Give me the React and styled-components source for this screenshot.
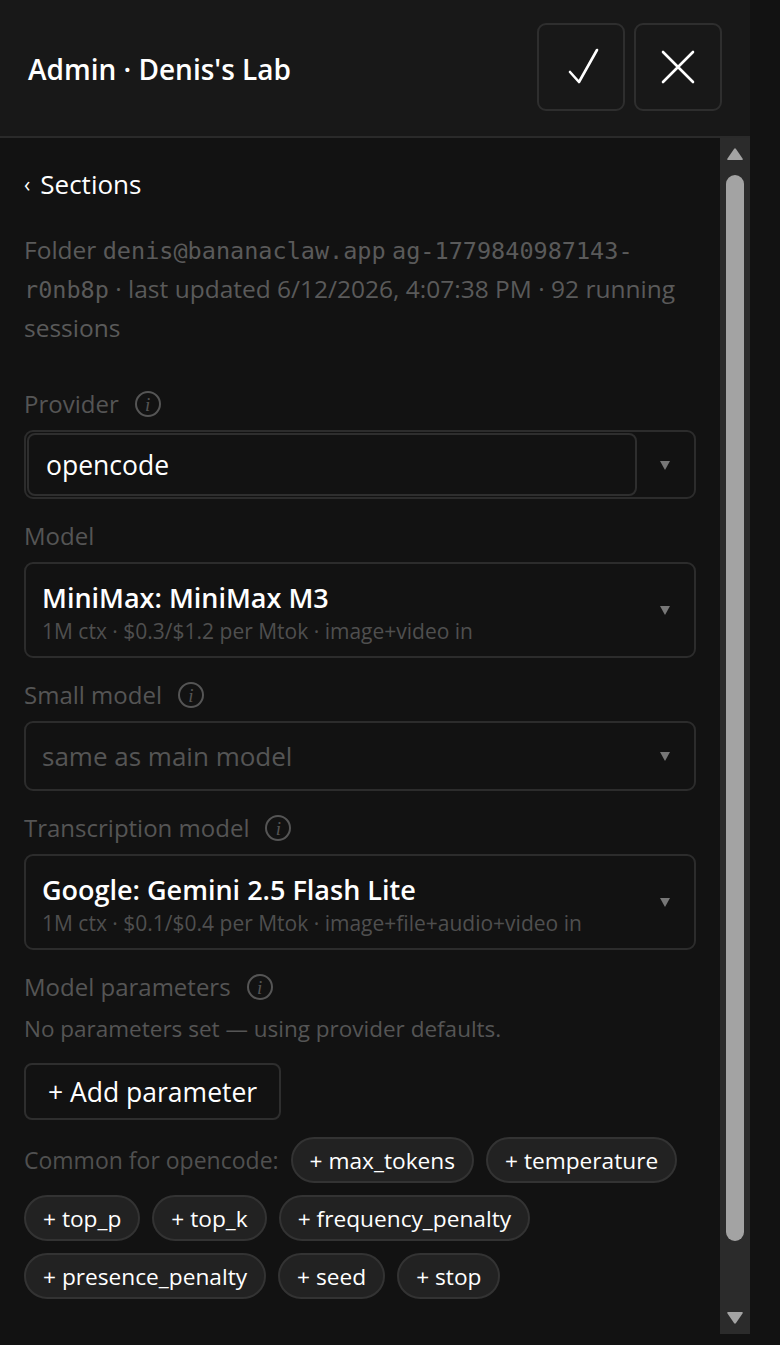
import React from 'react';
import styled, { createGlobalStyle } from 'styled-components';

const GlobalStyle = createGlobalStyle`
    *, *::before, *::after {
        box-sizing: border-box;
    }
    html, body {
        margin: 0;
        padding: 0;
        background: #121212;
    }
    body {
        font-family: 'Open Sans', 'Noto Sans', sans-serif;
        color: #fff;
    }
`;

const Page = styled.div`
    display: flex;
    width: 780px;
    height: 1345px;
    background: #121212;
    overflow: hidden;
`;

const Panel = styled.div`
    width: 750px;
    height: 1334px;
    display: flex;
    flex-direction: column;
`;

const Header = styled.header`
    height: 138px;
    flex-shrink: 0;
    display: flex;
    align-items: center;
    justify-content: space-between;
    padding: 0 28px 2px;
    background: #181818;
    border-bottom: 2px solid #2a2a2a;

    h1 {
        margin: 0;
        font-size: 28px;
        font-weight: 600;
        padding-top: 3px;
    }
`;

const HeaderActions = styled.div`
    display: flex;
    gap: 9px;
`;

const IconButton = styled.button`
    width: 88px;
    height: 88px;
    display: flex;
    align-items: center;
    justify-content: center;
    background: #181818;
    border: 2px solid #2e2e2e;
    border-radius: 9px;
    color: #fff;
    padding: 0;
`;

const Body = styled.div`
    flex: 1;
    display: flex;
    min-height: 0;
`;

const Content = styled.div`
    flex: 1;
    padding: 28px 24px 0 24px;
    overflow: hidden;
`;

const BackLink = styled.div`
    font-size: 26px;
    line-height: 36px;
    color: #fff;

    span {
        font-size: 21px;
        margin-right: 10px;
        position: relative;
        top: -2px;
    }
`;

const Meta = styled.p`
    margin: 27px 0 40px;
    font-size: 24.5px;
    line-height: 38px;
    color: #5a5a5a;

    code {
        font-family: 'DejaVu Sans Mono', 'Liberation Mono', monospace;
        font-size: 23.5px;
        line-height: 38px;
    }
`;

const Fields = styled.div`
    display: flex;
    flex-direction: column;
    gap: 20px;
`;

const Field = styled.div`
    display: flex;
    flex-direction: column;
    gap: 9px;
`;

const Label = styled.div`
    display: flex;
    align-items: center;
    gap: 16px;
    font-size: 24px;
    line-height: 34px;
    color: #555;
`;

const Info = styled.span`
    width: 26px;
    height: 26px;
    border: 2px solid #555;
    border-radius: 50%;
    display: inline-flex;
    align-items: center;
    justify-content: center;
    font-family: 'Liberation Serif', serif;
    font-style: italic;
    font-size: 19px;
    line-height: 1;
`;

const SelectBox = styled.div`
    position: relative;
    display: flex;
    align-items: center;
    height: ${(p) => p.h}px;
    border: 2px solid #2c2c2c;
    border-radius: 9px;
    background: #121212;
    padding: 0 60px 0 16px;
`;

const Caret = styled.span`
    position: absolute;
    right: 24px;
    top: 50%;
    margin-top: -4px;
    width: 0;
    height: 0;
    border-left: 5px solid transparent;
    border-right: 5px solid transparent;
    border-top: 9px solid #777;
`;

const Combo = styled.div`
    display: flex;
    height: 69px;
    border: 2px solid #2c2c2c;
    border-radius: 9px;
    padding: 1px 0 1px 1px;
`;

const ComboInput = styled.div`
    flex: 1;
    display: flex;
    align-items: center;
    padding-left: 17px;
    border: 2px solid #2e2e2e;
    border-radius: 8px;
    font-size: 26.5px;
    color: #fff;
`;

const ComboToggle = styled.div`
    position: relative;
    width: 57px;
    flex-shrink: 0;
`;

const Option = styled.div`
    display: flex;
    flex-direction: column;
    padding-top: 8px;

    strong {
        font-size: 27px;
        font-weight: 600;
        line-height: 34px;
        color: #fff;
    }

    small {
        font-size: 21px;
        line-height: 33px;
        color: #4f4f4f;
    }
`;

const Placeholder = styled.span`
    font-size: 26px;
    color: #555;
`;

const Hint = styled.div`
    margin-top: -11px;
    font-size: 22.5px;
    line-height: 32px;
    color: #555;
`;

const AddButton = styled.button`
    align-self: flex-start;
    margin-top: -2px;
    height: 57px;
    padding: 0 22px;
    font-family: inherit;
    font-size: 26.5px;
    color: #fff;
    background: #121212;
    border: 2px solid #2e2e2e;
    border-radius: 8px;
`;

const Chips = styled.div`
    display: flex;
    flex-wrap: wrap;
    align-items: center;
    gap: 12px;
    margin-top: -3px;
`;

const ChipsLabel = styled.span`
    font-size: 23px;
    color: #505050;
`;

const Chip = styled.button`
    height: 46px;
    padding: 0 17px;
    font-family: inherit;
    font-size: 22.7px;
    color: #fff;
    background: #222;
    border: 2px solid #333;
    border-radius: 23px;
`;

const Scrollbar = styled.div`
    width: 30px;
    flex-shrink: 0;
    background: #2b2b2b;
    display: flex;
    flex-direction: column;
    align-items: center;
    padding: 9px 0;
    gap: 14px;
`;

const Thumb = styled.div`
    width: 18px;
    height: 1066px;
    border-radius: 9px;
    background: #a3a3a3;
`;

const Spacer = styled.div`
    flex: 1;
`;

const Arrow = ({ down }) => (
    <svg width="18" height="14" viewBox="0 0 18 14">
        <path
            d={down ? 'M2 1 H16 Q17.5 1 16.5 2.5 L10 12 Q9 13.3 8 12 L1.5 2.5 Q0.5 1 2 1 Z' : 'M2 13 H16 Q17.5 13 16.5 11.5 L10 2 Q9 0.7 8 2 L1.5 11.5 Q0.5 13 2 13 Z'}
            fill="#a3a3a3"
        />
    </svg>
);

const params = [
    'max_tokens',
    'temperature',
    'top_p',
    'top_k',
    'frequency_penalty',
    'presence_penalty',
    'seed',
    'stop',
];

const App = () => {
    return (
        <Page>
            <GlobalStyle />
            <Panel>
                <Header>
                    <h1>Admin · Denis's Lab</h1>
                    <HeaderActions>
                        <IconButton aria-label="Save">
                            <svg width="40" height="40" viewBox="0 0 40 40">
                                <path
                                    d="M9 25 L18 35 L36 3"
                                    fill="none"
                                    stroke="#fff"
                                    strokeWidth="2.6"
                                    strokeLinecap="round"
                                    strokeLinejoin="round"
                                />
                            </svg>
                        </IconButton>
                        <IconButton aria-label="Close">
                            <svg width="34" height="34" viewBox="0 0 34 34">
                                <path
                                    d="M2 2 L32 32 M32 2 L2 32"
                                    fill="none"
                                    stroke="#fff"
                                    strokeWidth="2.6"
                                    strokeLinecap="round"
                                />
                            </svg>
                        </IconButton>
                    </HeaderActions>
                </Header>
                <Body>
                    <Content>
                        <BackLink>
                            <span>‹</span>Sections
                        </BackLink>
                        <Meta>
                            Folder <code>denis@bananaclaw.app</code>{' '}
                            <code>ag-1779840987143-r0nb8p</code> · last updated
                            6/12/2026, 4:07:38 PM · 92 running sessions
                        </Meta>
                        <Fields>
                            <Field>
                                <Label>
                                    Provider <Info>i</Info>
                                </Label>
                                <Combo>
                                    <ComboInput>opencode</ComboInput>
                                    <ComboToggle>
                                        <Caret />
                                    </ComboToggle>
                                </Combo>
                            </Field>
                            <Field>
                                <Label>Model</Label>
                                <SelectBox h={96}>
                                    <Option>
                                        <strong>MiniMax: MiniMax M3</strong>
                                        <small>
                                            1M ctx · $0.3/$1.2 per Mtok ·
                                            image+video in
                                        </small>
                                    </Option>
                                    <Caret />
                                </SelectBox>
                            </Field>
                            <Field>
                                <Label>
                                    Small model <Info>i</Info>
                                </Label>
                                <SelectBox h={70}>
                                    <Placeholder>same as main model</Placeholder>
                                    <Caret />
                                </SelectBox>
                            </Field>
                            <Field>
                                <Label>
                                    Transcription model <Info>i</Info>
                                </Label>
                                <SelectBox h={96}>
                                    <Option>
                                        <strong>
                                            Google: Gemini 2.5 Flash Lite
                                        </strong>
                                        <small>
                                            1M ctx · $0.1/$0.4 per Mtok ·
                                            image+file+audio+video in
                                        </small>
                                    </Option>
                                    <Caret />
                                </SelectBox>
                            </Field>
                            <Field>
                                <Label>
                                    Model parameters <Info>i</Info>
                                </Label>
                            </Field>
                            <Hint>
                                No parameters set — using provider defaults.
                            </Hint>
                            <AddButton>+ Add parameter</AddButton>
                            <Chips>
                                <ChipsLabel>Common for opencode:</ChipsLabel>
                                {params.map((p) => (
                                    <Chip key={p}>+ {p}</Chip>
                                ))}
                            </Chips>
                        </Fields>
                    </Content>
                    <Scrollbar>
                        <Arrow />
                        <Thumb />
                        <Spacer />
                        <Arrow down />
                    </Scrollbar>
                </Body>
            </Panel>
        </Page>
    );
};

export default App;
